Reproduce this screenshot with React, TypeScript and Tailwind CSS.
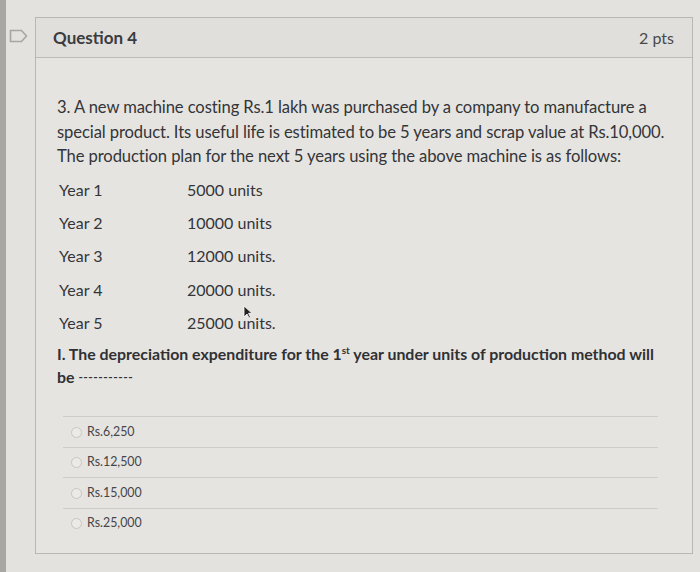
import React from "react";

const years = [
  ["Year 1", "5000 units"],
  ["Year 2", "10000 units"],
  ["Year 3", "12000 units."],
  ["Year 4", "20000 units."],
  ["Year 5", "25000 units."],
];

const options = ["Rs.6,250", "Rs.12,500", "Rs.15,000", "Rs.25,000"];

export default function App() {
  return (
    <div
      className="w-[700px] h-[572px] bg-[#e4e2df] flex overflow-hidden relative"
      style={{ fontFamily: "Lato, 'Open Sans', sans-serif" }}
    >
      <div className="w-[6px] bg-[#a9a7a4]" />
      <div className="w-[29px] pt-[29px] pl-[3px]">
        <svg width="19" height="14" viewBox="0 0 19 14" fill="none">
          <path d="M1.5 1.5h11l5 5.5-5 5.5h-11z" stroke="#a6a6a6" strokeWidth="1.6" />
        </svg>
      </div>

      <div className="mt-[17px] w-[658px] h-[537px] border border-[#b9b7b4] bg-[#e6e4e1] flex flex-col">
        <div className="h-[40px] bg-[#e1dfdc] border-b border-[#bcbab7] flex items-center justify-between pl-[17px] pr-[18px]">
          <span className="text-[17px] font-bold text-[#3a3c3e]">Question 4</span>
          <span className="text-[16px] text-[#48494b]">2 pts</span>
        </div>

        <div className="pl-[21px] pr-[20px] pt-[37px] text-[#333538]">
          <p className="text-[16.6px] leading-[24.5px] tracking-[-0.1px]">
            3. A new machine costing Rs.1 lakh was purchased by a company to manufacture a special
            product. Its useful life is estimated to be 5 years and scrap value at Rs.10,000. The
            production plan for the next 5 years using the above machine is as follows:
          </p>

          <div className="mt-[5px] flex flex-col">
            {years.map(([y, u]) => (
              <div key={y} className="flex h-[33.2px] items-center text-[16px] pl-[2px]">
                <span className="w-[128px]">{y}</span>
                <span className="relative">
                  {u}
                  {y === "Year 5" && (
                    <svg
                      className="absolute left-[56px] top-[-6px]"
                      width="9"
                      height="14"
                      viewBox="0 0 9 14"
                    >
                      <path d="M1 1v11l3-3 2 4 1.5-.7-2-4H9z" fill="#222" stroke="#fff" strokeWidth="0.8" />
                    </svg>
                  )}
                </span>
              </div>
            ))}
          </div>

          <p className="mt-[3px] pr-[8px] text-[15.9px] leading-[23px] font-bold text-[#2f3134]">
            I. The depreciation expenditure for the 1
            <span className="text-[10px] leading-none align-[6px]">st</span> year under units of
            production method will be{" "}
            <span className="text-[12px] tracking-[0.5px] align-[2px]">-----------</span>
          </p>
        </div>

        <div className="mt-[28px] ml-[27px] mr-[34px] flex flex-col">
          {options.map((o) => (
            <div
              key={o}
              className="h-[30.5px] border-t border-[#cfcdca] flex items-center pl-[8px] gap-[5px]"
            >
              <span className="w-[11px] h-[11px] rounded-full border border-[#c8c6c3] bg-[#eceae7]" />
              <span className="text-[12.4px] text-[#45464a]">{o}</span>
            </div>
          ))}
        </div>
      </div>
    </div>
  );
}
